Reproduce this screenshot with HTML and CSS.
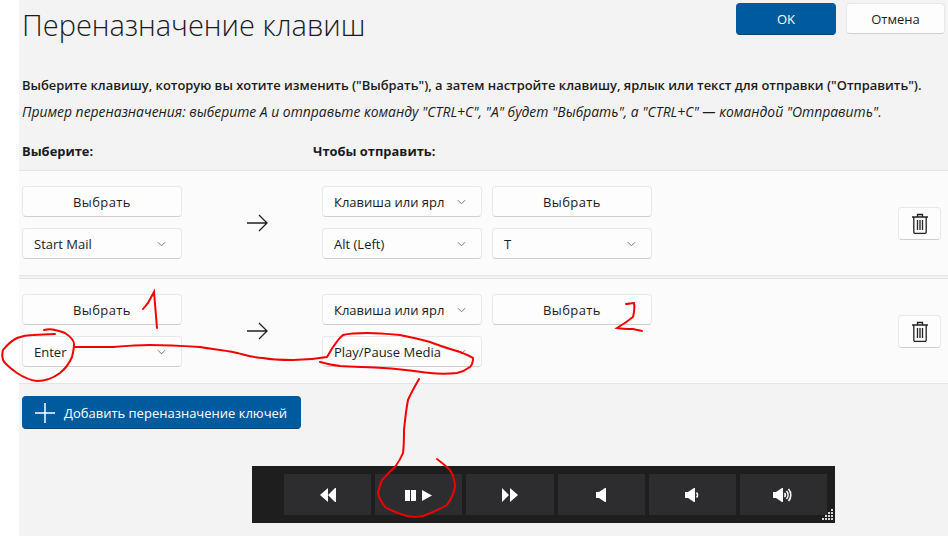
FILE: index.html
```html
<!DOCTYPE html>
<html lang="ru">
<head>
<meta charset="UTF-8" />
<title>Переназначение клавиш</title>
<link rel="stylesheet" href="styles.css">
</head>
<body>

<div class="page">
  <div class="head">
    <h1>Переназначение клавиш</h1>
    <button class="btn primary ok">OK</button>
    <button class="btn cancel">Отмена</button>
  </div>

  <p class="lead">Выберите клавишу, которую вы хотите изменить ("Выбрать"), а затем настройте клавишу, ярлык или текст для отправки ("Отправить").</p>
  <p class="hint">Пример переназначения: выберите A и отправьте команду "CTRL+C", "A" будет "Выбрать", а "CTRL+C" — командой "Отправить".</p>

  <div class="labels">
    <span class="label-from">Выберите:</span>
    <span>Чтобы отправить:</span>
  </div>

  <div class="row">
    <div class="col">
      <button class="btn pick">Выбрать</button>
      <button class="btn select">Start Mail<svg class="chev" viewBox="0 0 10 6"><path d="M1 1l4 4 4-4"/></svg></button>
    </div>
    <div class="arrow"><svg viewBox="0 0 22 18"><path d="M1 9h20M13 1l8 8-8 8"/></svg></div>
    <div class="col">
      <button class="btn select">Клавиша или ярл<svg class="chev" viewBox="0 0 10 6"><path d="M1 1l4 4 4-4"/></svg></button>
      <button class="btn select">Alt (Left)<svg class="chev" viewBox="0 0 10 6"><path d="M1 1l4 4 4-4"/></svg></button>
    </div>
    <div class="col">
      <button class="btn pick">Выбрать</button>
      <button class="btn select">T<svg class="chev" viewBox="0 0 10 6"><path d="M1 1l4 4 4-4"/></svg></button>
    </div>
    <button class="btn trash"><svg viewBox="0 0 18 21"><path d="M1 4h16M6.500 4V1.500h5V4M2.800 4v15a1.500 1.500 0 0 0 1.500 1.500h9.400a1.500 1.500 0 0 0 1.500-1.500V4M6.500 7v10M9 7v10M11.500 7v10"/></svg></button>
  </div>

  <div class="row">
    <div class="col">
      <button class="btn pick">Выбрать</button>
      <button class="btn select">Enter<svg class="chev" viewBox="0 0 10 6"><path d="M1 1l4 4 4-4"/></svg></button>
    </div>
    <div class="arrow"><svg viewBox="0 0 22 18"><path d="M1 9h20M13 1l8 8-8 8"/></svg></div>
    <div class="col">
      <button class="btn select">Клавиша или ярл<svg class="chev" viewBox="0 0 10 6"><path d="M1 1l4 4 4-4"/></svg></button>
      <button class="btn select">Play/Pause Media<svg class="chev" viewBox="0 0 10 6"><path d="M1 1l4 4 4-4"/></svg></button>
    </div>
    <div class="col">
      <button class="btn pick">Выбрать</button>
    </div>
    <button class="btn trash"><svg viewBox="0 0 18 21"><path d="M1 4h16M6.500 4V1.500h5V4M2.800 4v15a1.500 1.500 0 0 0 1.500 1.500h9.400a1.500 1.500 0 0 0 1.500-1.500V4M6.500 7v10M9 7v10M11.500 7v10"/></svg></button>
  </div>

  <button class="btn primary add"><svg viewBox="0 0 20 20"><path d="M10 0v20M0 10h20"/></svg>Добавить переназначение ключей</button>

  <div class="media">
    <div class="media-btn"><svg viewBox="0 0 16 14"><path d="M8 0v14L0 7zM15 0v14L8 7z"/><path d="M15 0h1v14h-1z"/></svg></div>
    <div class="media-btn"><svg viewBox="0 0 28 12"><path d="M0 1h5v11H0zM6 1h5v11H6zM17 1l10 5.500L17 12z"/></svg></div>
    <div class="media-btn"><svg viewBox="0 0 16 14"><path d="M0 0l7 7-7 7zM8 0l8 7-8 7z"/></svg></div>
    <div class="media-btn"><svg viewBox="0 0 10 14"><path d="M0 4h3l6-4h1v14H9L3 10H0z"/></svg></div>
    <div class="media-btn"><svg viewBox="0 0 14 14"><path d="M0 4h3l6-4h1v14H9L3 10H0z"/><path class="wave" d="M11.500 4.500a3.500 3.500 0 0 1 0 5"/></svg></div>
    <div class="media-btn"><svg viewBox="0 0 20 14"><path d="M0 4h3l6-4h1v14H9L3 10H0z"/><path class="wave" d="M11.500 5a3 3 0 0 1 0 4M13.500 3a6 6 0 0 1 0 8M15.500 1a9 9 0 0 1 0 12"/></svg></div>
    <svg class="grip" viewBox="0 0 12 12"><path d="M10 0h2v2h-2zM10 3h2v2h-2zM7 3h2v2H7zM10 6h2v2h-2zM7 6h2v2H7zM4 6h2v2H4zM10 9h2v2h-2zM7 9h2v2H7zM4 9h2v2H4zM1 9h2v2H1z"/></svg>
  </div>
</div>

<!-- пометки красным поверх скриншота -->
<svg class="marks" viewBox="0 0 948 536">
  <path d="M44 330C48 329 52 329 55 330C60 331 63 332 65 333C71 337 74 340 74 344C74 349 73 353 72 357C69 364 65 369 60 373C52 379 44 381 37 381C29 380 23 377 17 373C10 368 5 364 3 360C2 356 2 353 3 350C7 345 11 341 17 338C22 336 27 335 33 335L55 334"/>
  <path d="M75 347C88 347 100 347 113 347C125 346 138 345 150 345C167 345 184 346 200 347C211 349 222 350 233 352C243 354 253 358 263 358C273 360 283 360 293 360C304 360 316 359 327 357C329 354 331 350 333 347C336 343 339 338 343 335C351 333 359 333 367 333C378 333 389 334 400 335C410 337 420 339 430 342C440 346 450 349 460 352C465 354 470 356 473 358C473 362 472 365 470 367C466 370 462 372 457 373C448 374 439 374 430 373C414 371 399 369 383 368C369 367 354 367 340 366C333 365 327 364 320 362"/>
  <path d="M143 309C145 307 146 305 148 303C150 299 152 296 154 292C155 304 156 316 157 328"/>
  <path d="M626 304C629 304 631 303 634 303C635 308 634 313 633 317C628 321 622 325 617 328C622 329 628 329 633 329C636 330 639 330 642 331"/>
  <path d="M419 379C415 386 411 393 408 400C406 410 405 420 404 430C404 438 404 446 403 453C401 458 398 463 395 467C390 471 386 476 382 480C380 484 379 489 378 493C379 498 382 503 385 507C392 511 399 514 407 516C412 517 418 517 423 516C431 513 440 509 447 505C451 499 454 493 455 487C455 481 453 475 450 470C446 466 441 462 437 459"/>
</svg>

</body>
</html>
```

FILE: styles.css
```css
* {
  box-sizing: border-box;
}
html, body {
  margin: 0;
  height: 100%;
  overflow: hidden;
  background: #fff;
}
body {
  font-family: "Open Sans", "Noto Sans", sans-serif;
  font-size: 13px;
  color: #1b1b1b;
}
.page {
  position: relative;
  height: 536px;
  margin-left: 19px;
  background: #f3f3f3;
}
.head {
  display: flex;
  align-items: flex-start;
  height: 76px;
  padding: 3px 3px 0 3px;
}
.head h1 {
  margin: 0 auto 0 0;
  padding-top: 3px;
  font-size: 29px;
  line-height: 38px;
  font-weight: 300;
}
.btn {
  display: block;
  height: 31px;
  width: 160px;
  padding: 0;
  font: inherit;
  color: #1b1b1b;
  background: #fdfdfd;
  border: 1px solid #e8e8e8;
  border-bottom-color: #cfcfcf;
  border-radius: 4px;
}
.pick {
  letter-spacing: 0.400px;
}
.primary {
  color: #fff;
  background: #005a9e;
  border: 1px solid #005a9e;
  border-bottom-color: #00457a;
}
.ok {
  width: 100px;
  height: 32px;
}
.cancel {
  width: 99px;
  margin-left: 10px;
}
.select {
  display: flex;
  align-items: center;
  justify-content: space-between;
  padding: 0 15px 0 11px;
}
.chev {
  width: 9px;
  height: 6px;
  fill: none;
  stroke: #666;
}
.lead {
  margin: 0 0 0 3px;
  font-size: 12.930px;
  line-height: 18px;
  font-weight: 600;
  white-space: nowrap;
}
.hint {
  margin: 9px 0 0 3px;
  font-size: 13.900px;
  line-height: 18px;
  font-style: italic;
  white-space: nowrap;
}
.labels {
  display: flex;
  margin: 21px 0 10px 3px;
  line-height: 18px;
  font-size: 12.900px;
  font-weight: 700;
}
.label-from {
  width: 291px;
}
.row {
  display: flex;
  align-items: center;
  height: 106px;
  margin-bottom: 2px;
  padding: 0 7px 0 3px;
  background: #fbfbfb;
  border-top: 1px solid #e5e5e5;
  border-bottom: 1px solid #e5e5e5;
}
.col {
  display: flex;
  flex-direction: column;
  align-self: flex-start;
  gap: 11px;
  width: 160px;
  margin-top: 15px;
}
.col + .col {
  margin-left: 10px;
}
.arrow {
  width: 140px;
}
.arrow svg {
  display: block;
  width: 22px;
  height: 18px;
  margin-left: 64px;
  fill: none;
  stroke: #222;
  stroke-width: 1.300;
}
.trash {
  display: flex;
  align-items: center;
  justify-content: center;
  width: 43px;
  height: 33px;
  margin-left: auto;
}
.trash svg {
  width: 18px;
  height: 21px;
  fill: none;
  stroke: #222;
  stroke-width: 1.300;
}
.add {
  display: flex;
  align-items: center;
  gap: 9px;
  width: 279px;
  height: 33px;
  margin: 12px 0 0 3px;
  padding-left: 12px;
}
.add svg {
  width: 20px;
  height: 20px;
  fill: none;
  stroke: #fff;
  stroke-width: 1.500;
}
.media {
  position: relative;
  display: flex;
  gap: 4px;
  width: 583px;
  height: 57px;
  margin: 37px 0 0 233px;
  padding: 8px 8px 8px 32px;
  background: #1e1e1e;
}
.media-btn {
  display: flex;
  align-items: center;
  justify-content: center;
  flex: 1;
  background: #2d2d30;
}
.media-btn svg {
  height: 14px;
  max-width: 28px;
  fill: #fff;
}
.media-btn .wave {
  fill: none;
  stroke: #fff;
  stroke-width: 1.600;
}
.grip {
  position: absolute;
  right: 2px;
  bottom: 2px;
  width: 12px;
  height: 12px;
  fill: #d8d8d8;
}
.marks {
  position: absolute;
  left: 0;
  top: 0;
  width: 948px;
  height: 536px;
  fill: none;
  stroke: #f40000;
  stroke-width: 2;
  stroke-linecap: round;
  pointer-events: none;
}
```
